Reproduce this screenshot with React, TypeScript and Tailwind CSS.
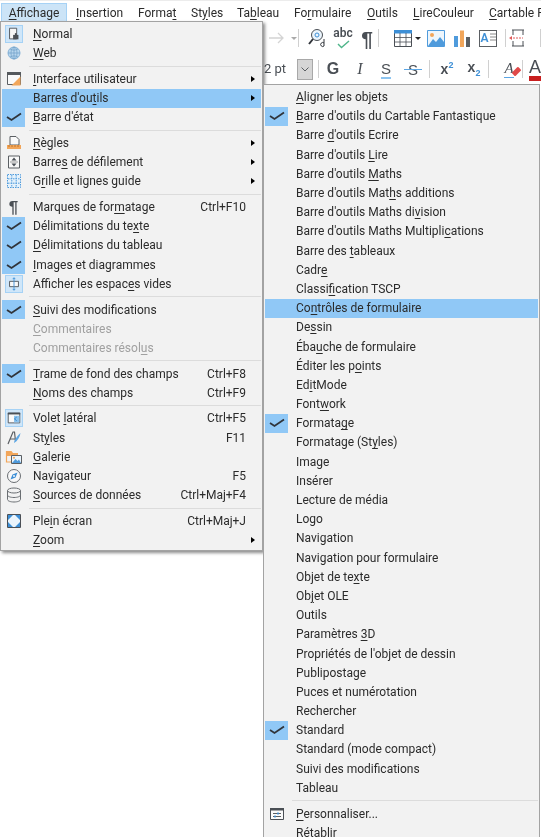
import type { ReactNode } from "react";

type Row = {
	label?: string;
	shortcut?: string;
	check?: boolean;
	more?: boolean;
	active?: boolean;
	disabled?: boolean;
	icon?: ReactNode;
	sep?: boolean;
};

// "_" marks the mnemonic letter
const Label = ({ text }: { text: string }) => {
	const i = text.indexOf("_");
	if (i < 0) return <span>{text}</span>;
	return (
		<span>
			{text.slice(0, i)}
			<span className="underline underline-offset-2">{text[i + 1]}</span>
			{text.slice(i + 2)}
		</span>
	);
};

const Svg = ({ children }: { children: ReactNode }) => (
	<svg width="18" height="18" viewBox="0 0 18 18" fill="none">
		{children}
	</svg>
);

const NormalIcon = () => (
	<span className="flex h-[18px] w-[18px] items-center justify-center border border-[#a6d2f5] bg-[#cfe6f9]">
		<Svg>
			<path d="M4 2.500h8v12H4z" fill="#f6f6f6" stroke="#4a4f55" />
			<path d="M8 10h6v5H8z" fill="#4a4f55" />
			<path d="M10 8h2v3h-2z" fill="#4a4f55" />
		</Svg>
	</span>
);
const WebIcon = () => (
	<Svg>
		<circle cx="9" cy="9" r="6" fill="#b7d6ee" stroke="#86b3d8" />
		<path d="M3 9h12M9 3v12M5 5c2 1.500 6 1.500 8 0M5 13c2-1.500 6-1.500 8 0" stroke="#6f9fc7" strokeWidth=".7" />
		<ellipse cx="9" cy="9" rx="3" ry="6" stroke="#6f9fc7" strokeWidth=".7" />
	</Svg>
);
const InterfaceIcon = () => (
	<Svg>
		<path d="M2.500 2.500h13v12h-13z" fill="#fafafa" stroke="#5b5f63" />
		<path d="M2 2h14v3H2z" fill="#55595d" />
		<path d="M15.500 6.500v9h-9z" fill="#f2a65a" />
	</Svg>
);
const RulesIcon = () => (
	<Svg>
		<path d="M5 2.500h6l3 3V11H5z" fill="#fafafa" stroke="#5b5f63" />
		<path d="M2 11h14v4H2z" fill="#f2a65a" />
		<path d="M4 11v2M7 11v2M10 11v2M13 11v2" stroke="#b56a20" strokeWidth=".8" />
	</Svg>
);
const ScrollIcon = () => (
	<Svg>
		<path d="M3.500 3h11v12h-11z" fill="#f8f8f8" stroke="#5b5f63" />
		<path d="M9 4.500l2.500 3h-5zM9 13.500l-2.500-3h5z" fill="#4a4f55" />
		<path d="M5 9h8" stroke="#9a9a9a" />
	</Svg>
);
const GridIcon = () => (
	<Svg>
		<path d="M2.500 2.500h13v13h-13z" fill="#e6f2fb" stroke="#4f9bdc" strokeDasharray="1.500 1" />
		<path d="M6.800 3v12M11.200 3v12M3 6.800h12M3 11.200h12" stroke="#4f9bdc" strokeDasharray="1.500 1" />
	</Svg>
);
const SpacesIcon = () => (
	<span className="flex h-[18px] w-[18px] items-center justify-center border border-[#a6d2f5] bg-[#cfe6f9]">
		<Svg>
			<path d="M4 6h10v6H4z" fill="#f8f8f8" stroke="#4a4f55" />
			<path d="M9 2v14M7.500 3.500L9 2l1.500 1.500M7.500 14.500L9 16l1.500-1.500" stroke="#3d8fd6" />
		</Svg>
	</span>
);
const PilcrowIcon = () => (
	<span className="font-['Liberation_Sans',sans-serif] text-[17px] font-bold leading-none text-[#4a4f55]">¶</span>
);
const SidebarIcon = () => (
	<span className="flex h-[18px] w-[18px] items-center justify-center border border-[#a6d2f5] bg-[#cfe6f9]">
		<Svg>
			<path d="M2.500 3.500h13v11h-13z" fill="#fafafa" stroke="#4a4f55" />
			<path d="M2 3h14v2H2z" fill="#4a4f55" />
			<path d="M9 6.500h6v7.500H9z" fill="#8cc4f0" />
			<path d="M12 8l-2.500 2 2.500 2" stroke="#2f7fc4" />
		</Svg>
	</span>
);
const StylesIcon = () => (
	<Svg>
		<path d="M3 15L8 3h1.500l1 9" stroke="#5b5f63" strokeWidth="1.200" />
		<path d="M5 10h5" stroke="#5b5f63" />
		<path d="M9 14c0-3 4-8 6.500-10-.5 4-3 8-6.500 10z" fill="#5aa5e4" />
	</Svg>
);
const GalleryIcon = () => (
	<Svg>
		<path d="M1.500 3h5l1.500 2h5v3H1.500z" fill="#f2a65a" />
		<path d="M1.500 3v11h5" stroke="#f2a65a" strokeWidth="1.200" />
		<path d="M6.500 7.500h10v8h-10z" fill="#eaf4fc" stroke="#5b5f63" />
		<path d="M7 15l3.500-4 2 2 1.500-1.500 2 3.500z" fill="#4f9bdc" />
		<circle cx="9" cy="9.700" r="1" fill="#f2a65a" />
	</Svg>
);
const NavIcon = () => (
	<Svg>
		<circle cx="9" cy="9" r="6.500" fill="#f8f8f8" stroke="#6a6e72" />
		<path d="M12.500 5.500L10.500 10.500 5.500 12.500 7.500 7.500z" fill="#3d8fd6" />
		<circle cx="9" cy="9" r="1" fill="#f8f8f8" />
	</Svg>
);
const DataIcon = () => (
	<Svg>
		<ellipse cx="9" cy="4.500" rx="6.500" ry="2.500" stroke="#6a6e72" />
		<path d="M2.500 4.500v9c0 1.400 2.900 2.500 6.500 2.500s6.500-1.100 6.500-2.500v-9M2.500 9c0 1.400 2.900 2.500 6.500 2.500s6.500-1.100 6.500-2.500" stroke="#6a6e72" />
	</Svg>
);
const FullIcon = () => (
	<Svg>
		<path d="M2.500 2.500h13v13h-13z" fill="#eaf4fc" stroke="#4a4f55" />
		<path d="M3 3h5L3 8zM15 3v5l-5-5zM3 15v-5l5 5zM15 15h-5l5-5z" fill="#3d8fd6" />
	</Svg>
);
const CustomIcon = () => (
	<Svg>
		<path d="M2.500 3.500h13v11h-13z" fill="#fafafa" stroke="#4a4f55" />
		<path d="M2 3h14v2.500H2z" fill="#4a4f55" />
		<path d="M5 8.500h8M5 11.500h8" stroke="#5b5f63" />
		<path d="M10 7.500v2M7 10.500v2" stroke="#3d8fd6" strokeWidth="1.500" />
	</Svg>
);

const MAIN: Row[] = [
	{ label: "_Normal", icon: <NormalIcon /> },
	{ label: "_Web", icon: <WebIcon /> },
	{ sep: true },
	{ label: "_Interface utilisateur", icon: <InterfaceIcon />, more: true },
	{ label: "Barres d'ou_tils", more: true, active: true },
	{ label: "_Barre d'état", check: true },
	{ sep: true },
	{ label: "_Règles", icon: <RulesIcon />, more: true },
	{ label: "Barre_s de défilement", icon: <ScrollIcon />, more: true },
	{ label: "G_rille et lignes guide", icon: <GridIcon />, more: true },
	{ sep: true },
	{ label: "Marques de for_matage", icon: <PilcrowIcon />, shortcut: "Ctrl+F10" },
	{ label: "Délimitations du te_xte", check: true },
	{ label: "_Délimitations du tableau", check: true },
	{ label: "_Images et diagrammes", check: true },
	{ label: "Afficher les espac_es vides", icon: <SpacesIcon /> },
	{ sep: true },
	{ label: "_Suivi des modifications", check: true },
	{ label: "_Commentaires", disabled: true },
	{ label: "Commentaires résol_us", disabled: true },
	{ sep: true },
	{ label: "_Trame de fond des champs", check: true, shortcut: "Ctrl+F8" },
	{ label: "_Noms des champs", shortcut: "Ctrl+F9" },
	{ sep: true },
	{ label: "Volet _latéral", icon: <SidebarIcon />, shortcut: "Ctrl+F5" },
	{ label: "St_yles", icon: <StylesIcon />, shortcut: "F11" },
	{ label: "_Galerie", icon: <GalleryIcon /> },
	{ label: "Na_vigateur", icon: <NavIcon />, shortcut: "F5" },
	{ label: "_Sources de données", icon: <DataIcon />, shortcut: "Ctrl+Maj+F4" },
	{ sep: true },
	{ label: "Ple_in écran", icon: <FullIcon />, shortcut: "Ctrl+Maj+J" },
	{ label: "_Zoom", more: true },
];

const SUB: Row[] = [
	{ label: "_Aligner les objets" },
	{ label: "_Barre d'outils du Cartable Fantastique", check: true },
	{ label: "Barre _d'outils Ecrire" },
	{ label: "Barre d'outils _Lire" },
	{ label: "Barre d'outils _Maths" },
	{ label: "Barre d'outils Mat_hs additions" },
	{ label: "Barre d'outils Maths di_vision" },
	{ label: "Barre d'outils Maths Multipli_cations" },
	{ label: "Barre des _tableaux" },
	{ label: "Cadr_e" },
	{ label: "Classi_fication TSCP" },
	{ label: "Co_ntrôles de formulaire", active: true },
	{ label: "De_ssin" },
	{ label: "Éba_uche de formulaire" },
	{ label: "Éditer les p_oints" },
	{ label: "Ed_itMode" },
	{ label: "Font_work" },
	{ label: "Formata_ge", check: true },
	{ label: "Formatage (St_yles)" },
	{ label: "Image" },
	{ label: "Insérer" },
	{ label: "Lecture de média" },
	{ label: "Logo" },
	{ label: "Navigation" },
	{ label: "Navigation pour formulaire" },
	{ label: "Objet de te_xte" },
	{ label: "Ob_jet OLE" },
	{ label: "Outils" },
	{ label: "Paramètres _3D" },
	{ label: "Propriétés de l'objet de dessin" },
	{ label: "Publipostage" },
	{ label: "Puces et numérotation" },
	{ label: "Rechercher" },
	{ label: "Standard", check: true },
	{ label: "Standard (mode compact)" },
	{ label: "Suivi des modifications" },
	{ label: "Tableau" },
	{ sep: true },
	{ label: "_Personnaliser...", icon: <CustomIcon /> },
	{ label: "Rétablir" },
];

const MenuRow = ({ row }: { row: Row }) => {
	if (row.sep) {
		return (
			<div className="flex h-[6.5px] items-center pl-[27px]">
				<div className="h-px w-full bg-[#dcdcdc]" />
			</div>
		);
	}
	return (
		<div className={`flex h-[19.2px] items-center ${row.active ? "bg-[#90c8f6]" : ""}`}>
			<div
				className={`flex h-full w-[23px] shrink-0 items-center justify-center ${row.check ? "bg-[#90c8f6]" : ""}`}
			>
				{row.check ? (
					<svg width="16" height="10" viewBox="0 0 16 10" fill="none">
						<path d="M1 5l4.500 3L15 1.500" stroke="#30343a" strokeWidth="1.800" />
					</svg>
				) : (
					row.icon
				)}
			</div>
			<div className={`ml-[8px] flex-1 whitespace-nowrap ${row.disabled ? "text-[#a0a0a0]" : ""}`}>
				<Label text={row.label ?? ""} />
			</div>
			{row.shortcut && <div className="mr-[15px] whitespace-nowrap">{row.shortcut}</div>}
			{row.more && <div className="mr-[6px] h-0 w-0 border-y-[3px] border-l-[4px] border-y-transparent border-l-black" />}
		</div>
	);
};

const MenuBarItem = ({ text, className }: { text: string; className: string }) => (
	<div className={`flex h-[19px] shrink-0 items-center whitespace-nowrap ${className}`}>
		<Label text={text} />
	</div>
);

const Sep = ({ className = "" }: { className?: string }) => (
	<div className={`h-[18px] w-px shrink-0 bg-[#d0d0d0] ${className}`} />
);

const Slot = ({ className, children }: { className: string; children: ReactNode }) => (
	<div className={`flex h-full shrink-0 items-center justify-center ${className}`}>{children}</div>
);

export default function App() {
	return (
		<div className="relative h-[837px] w-[541px] overflow-hidden bg-white font-['Roboto',sans-serif] text-[12px] text-[#2b2b2b] blur-[0.3px]">
			<div className="flex h-[22px] items-end overflow-hidden border-t border-[#ececec] pl-px">
				<MenuBarItem text="_Affichage" className="w-[66px] justify-center border border-[#a6d2f5] bg-[#cce4f7]" />
				<MenuBarItem text="_Insertion" className="ml-[9px] w-[62px]" />
				<MenuBarItem text="Forma_t" className="w-[53px]" />
				<MenuBarItem text="St_yles" className="w-[46px]" />
				<MenuBarItem text="Ta_bleau" className="w-[57px]" />
				<MenuBarItem text="Fo_rmulaire" className="w-[73px]" />
				<MenuBarItem text="_Outils" className="w-[46px]" />
				<MenuBarItem text="_LireCouleur" className="w-[76px]" />
				<MenuBarItem text="_Cartable Fantastique" className="" />
			</div>

			<div className="ml-[263px] text-[#4a4f55]">
				<div className="flex h-[32px] items-center">
					<Slot className="w-[26px]">
						<svg width="20" height="14" viewBox="0 0 20 14" fill="none">
							<path d="M3 7h14M12 2l5 5-5 5" stroke="#d4d4d4" strokeWidth="1.300" />
						</svg>
					</Slot>
					<Slot className="w-[9px]">
						<div className="h-0 w-0 border-x-[3px] border-t-[3px] border-x-transparent border-t-[#aaaaaa]" />
					</Slot>
					<Sep />
					<Slot className="ml-[6px] w-[25px]">
						<svg width="20" height="20" viewBox="0 0 20 20" fill="none">
							<circle cx="9" cy="7" r="5.500" fill="#eaf4fc" stroke="#4a4f55" />
							<path d="M5 11l-4 5" stroke="#30343a" strokeWidth="2" />
							<circle cx="9" cy="7" r="2" stroke="#3d8fd6" />
							<path d="M16 11v7M16 15a2 2 0 1 0 0 3" stroke="#30343a" />
						</svg>
					</Slot>
					<Slot className="w-[26px]">
						<div className="relative flex h-[22px] w-[24px] justify-center text-[12px] font-semibold leading-[13px]">
							abc
							<svg className="absolute bottom-0 left-[6px]" width="13" height="9" viewBox="0 0 13 9" fill="none">
								<path d="M1 4l3.500 3.500L12 1" stroke="#4fb58a" strokeWidth="1.400" />
							</svg>
						</div>
					</Slot>
					<Slot className="w-[22px]">
						<span className="font-['Liberation_Sans',sans-serif] text-[21px] font-bold leading-none">¶</span>
					</Slot>
					<Sep />
					<Slot className="ml-[12px] w-[24px]">
						<svg width="18" height="17" viewBox="0 0 18 17" fill="none">
							<path d="M.5.500h17v16H.5z" fill="#fff" stroke="#4a4f55" />
							<path d="M0 0h18v3.500H0z" fill="#3d8fd6" />
							<path d="M6 3v13M12 3v13M1 7.500h16M1 12h16" stroke="#4a4f55" strokeWidth=".8" />
						</svg>
					</Slot>
					<Slot className="w-[6px]">
						<div className="h-0 w-0 border-x-[3px] border-t-[3px] border-x-transparent border-t-[#222222]" />
					</Slot>
					<Slot className="ml-[3px] w-[24px]">
						<svg width="18" height="17" viewBox="0 0 18 17" fill="none">
							<path d="M.5.500h17v16H.5z" fill="#eef6fc" stroke="#4f9bdc" />
							<path d="M1 16l5-7 3 3 4-5 4 5v4z" fill="#4f9bdc" />
							<circle cx="5" cy="5" r="2" fill="#f2a65a" />
						</svg>
					</Slot>
					<Slot className="w-[28px]">
						<svg width="18" height="17" viewBox="0 0 18 17" fill="none">
							<path d="M1 6h4v11H1z" fill="#4f9bdc" />
							<path d="M7 .500h4v16.500H7z" fill="#f2a65a" />
							<path d="M13 7h4v10h-4z" fill="#5b5f63" />
						</svg>
					</Slot>
					<Slot className="w-[24px]">
						<div className="flex h-[17px] w-[18px] items-center justify-center gap-px border border-[#5b5f63]">
							<span className="text-[12px] font-semibold leading-none text-[#3d8fd6]">A</span>
							<svg width="6" height="10" viewBox="0 0 6 10" fill="none">
								<path d="M0 1h6M0 4h6M0 7h6" stroke="#8a8a8a" />
							</svg>
						</div>
					</Slot>
					<Sep className="ml-[5px]" />
					<Slot className="w-[24px]">
						<svg width="18" height="18" viewBox="0 0 18 18" fill="none">
							<path d="M3 1h12M3 17h12M4 1v5M14 1v5M4 12v5M14 12v5" stroke="#4a4f55" />
							<path d="M4 9h10" stroke="#e05a5a" strokeDasharray="2 1" />
							<path d="M0 9l3-2v4z" fill="#e05a5a" />
						</svg>
					</Slot>
					<Sep className="ml-[10px]" />
				</div>
				<div className="flex h-[30px] items-center">
					<div className="w-[34px] shrink-0 pl-px text-[13px]">2 pt</div>
					<div className="flex h-[21px] w-[16px] shrink-0 items-center justify-center border border-[#a8a8a8] bg-[#d6d6d6]">
						<svg width="8" height="5" viewBox="0 0 8 5" fill="none">
							<path d="M.5.500L4 4 7.500.500" stroke="#5b5f63" />
						</svg>
					</div>
					<Sep className="ml-[5px]" />
					<Slot className="w-[28px]">
						<span className="font-['Liberation_Sans',sans-serif] text-[16px] font-bold">G</span>
					</Slot>
					<Slot className="w-[26px]">
						<span className="font-['Liberation_Serif',serif] text-[16px] italic">I</span>
					</Slot>
					<Slot className="w-[26px]">
						<span className="border-b-2 border-[#8cc4f0] font-['Liberation_Sans',sans-serif] text-[15px] leading-[17px]">S</span>
					</Slot>
					<Slot className="w-[28px]">
						<span className="relative font-['Liberation_Sans',sans-serif] text-[15px] leading-[17px]">
							S
							<span className="absolute left-[-4px] top-[8px] h-[1.500px] w-[18px] bg-[#5aa5e4]" />
						</span>
					</Slot>
					<Sep className="ml-[2px]" />
					<Slot className="w-[34px]">
						<span className="font-['Liberation_Sans',sans-serif] text-[14px] font-bold">
							x<span className="align-super text-[9px] text-[#3d8fd6]">2</span>
						</span>
					</Slot>
					<Slot className="w-[20px]">
						<span className="font-['Liberation_Sans',sans-serif] text-[14px] font-bold">
							x<span className="align-sub text-[9px] text-[#3d8fd6]">2</span>
						</span>
					</Slot>
					<Sep className="ml-[4px]" />
					<Slot className="ml-[7px] w-[26px]">
						<span className="relative border-b border-[#5aa5e4] font-['Liberation_Serif',serif] text-[15px] italic leading-[17px]">
							A
							<span className="absolute left-[8px] top-[9px] h-[5px] w-[9px] -rotate-45 rounded-[1px] bg-[#e04a4a]" />
						</span>
					</Slot>
					<Sep />
					<Slot className="ml-[4px] w-[16px]">
						<span className="border-b-[5px] border-[#c81e1e] font-['Liberation_Sans',sans-serif] text-[18px] leading-[18px]">A</span>
					</Slot>
				</div>
			</div>

			<div className="absolute left-0 top-[21px] z-10 w-[263px] border border-[#a3a3a3] bg-[#f2f2f2] px-px pt-[2.5px] shadow-[2px_2px_3px_rgba(0,0,0,0.45)]">
				{MAIN.map((row, i) => (
					<MenuRow key={`main-${i}`} row={row} />
				))}
			</div>

			<div className="absolute left-[263px] top-[84px] z-20 w-[277px] border border-[#a3a3a3] bg-[#f2f2f2] px-px pt-[2.5px]">
				{SUB.map((row, i) => (
					<MenuRow key={`sub-${i}`} row={row} />
				))}
			</div>
		</div>
	);
}
